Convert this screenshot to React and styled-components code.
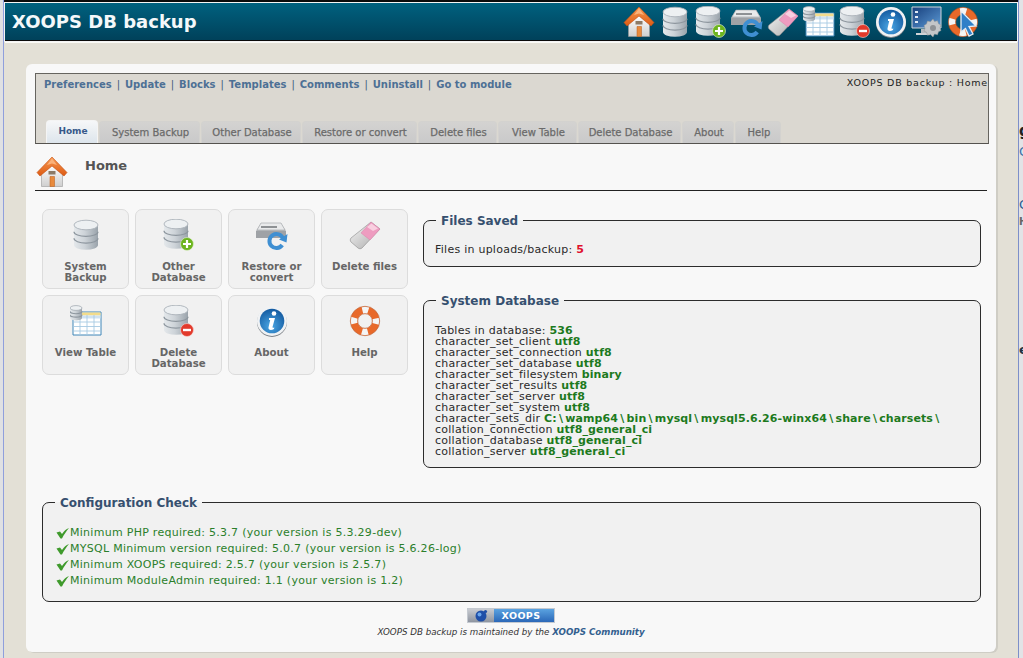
import React from 'react';
import styled, { createGlobalStyle } from 'styled-components';

const GlobalStyle = createGlobalStyle`
  html, body {
    margin: 0;
    padding: 0;
    height: 100%;
    overflow: hidden;
    background: #e3e0d6;
  }
  body {
    font-family: "DejaVu Sans", Verdana, sans-serif;
    font-size: 11px;
    color: #222;
  }
`;

const Screen = styled.div`
  display: flex;
  width: 1023px;
  height: 658px;
  overflow: hidden;
`;

const LeftEdge = styled.div`
  flex: 0 0 4px;
  background: #dfe0e3;
  border-right: 1px solid #8f9fdc;
  box-sizing: border-box;
`;

const RightEdge = styled.div`
  flex: 0 0 5px;
  box-sizing: border-box;
  border-left: 1px solid #7d8fc9;
  background: #e2e3e6;
  display: flex;
  flex-direction: column;
  overflow: hidden;
`;

const Fragment = styled.span`
  display: block;
  margin-top: ${p => p.$top}px;
  font-size: ${p => p.$size || 13}px;
  line-height: 14px;
  font-weight: ${p => (p.$bold ? 700 : 400)};
  color: ${p => p.$color || '#333'};
  white-space: nowrap;
`;

const Page = styled.div`
  flex: 1;
  min-width: 0;
  display: flex;
  flex-direction: column;
  background: #e3e0d6;
`;

const TopBar = styled.header`
  height: 42px;
  box-sizing: border-box;
  border-top: 2px solid #0b0b0b;
  background: #f4f4f4;
  padding-top: 1px;
  display: flex;
  flex-direction: column;
  flex-shrink: 0;
`;

const TopBarInner = styled.div`
  height: 37px;
  margin-left: 1px;
  margin-right: 1px;
  padding: 0 38px 0 7px;
  display: flex;
  align-items: center;
  justify-content: space-between;
  background: linear-gradient(#00617f, #00415a);
  border-bottom: 1px solid #0a0a0a;
`;

const Title = styled.h1`
  margin: 0;
  font-size: 18px;
  line-height: 24px;
  font-weight: 700;
  color: #f4f8fa;
`;

const IconBar = styled.nav`
  display: flex;
  gap: 4px;
  align-items: center;
`;

const TopLine = styled.div`
  height: 1px;
  margin: 0 1px;
  background: #fbfbf6;
  flex-shrink: 0;
`;

const Outer = styled.main`
  flex: 1;
  min-height: 0;
  padding: 21px 22px 6px 22px;
  display: flex;
  flex-direction: column;
`;

const Card = styled.section`
  flex: 1;
  box-sizing: border-box;
  padding: 9px 7px 0 9px;
  background: #f8f8f8;
  border-radius: 6px;
  box-shadow: 2px 1px 0 #cfcdc5;
`;

const AdminNav = styled.div`
  height: 71px;
  box-sizing: border-box;
  border: 1px solid #66645f;
  border-bottom-color: #55534f;
  background: #dbd8d1;
  display: flex;
  flex-direction: column;
`;

const AdminTop = styled.div`
  display: flex;
  justify-content: space-between;
  padding: 4px 0 0 8px;
`;

const AdminLinks = styled.div`
  font-size: 10px;
  line-height: 14px;
  color: #3c5a7c;
`;

const AdminLink = styled.a`
  font-weight: 700;
  color: #4d7095;
`;

const Sep = styled.span`
  margin: 0 1.8px;
`;

const Crumb = styled.div`
  margin-top: -1px;
  font-size: 9.5px;
  line-height: 12px;
  color: #222;
  letter-spacing: 0.78px;
`;

const Tabs = styled.ul`
  list-style: none;
  display: flex;
  gap: 1px;
  margin: auto 0 0 10px;
  padding: 0;
`;

const Tab = styled.li`
  box-sizing: border-box;
  width: ${p => p.$width}px;
  height: ${p => (p.$active ? 23 : 22)}px;
  padding-left: 2px;
  border: 1px solid ${p => (p.$active ? '#f4f4f4' : '#d3d2cf')};
  border-bottom: 0;
  border-radius: 4px 4px 0 0;
  background: ${p => (p.$active
    ? 'linear-gradient(#f6f7f8, #dde5ec)'
    : 'linear-gradient(#d4d3d1, #c9c9ca)')};
  color: ${p => (p.$active ? '#37598a' : '#6a6a6a')};
  font-size: ${p => (p.$active ? 9 : 10)}px;
  font-weight: ${p => (p.$active ? 700 : 400)};
  -webkit-text-stroke: ${p => (p.$active ? 0 : 0.25)}px;
  line-height: 21px;
  text-align: center;
  white-space: nowrap;
  align-self: flex-end;
`;

const PageHead = styled.div`
  display: flex;
  height: 47px;
  box-sizing: border-box;
  margin-right: 2px;
  border-bottom: 1px solid #222;
  padding-top: 12px;
`;

const HeadIcon = styled.div`
  width: 49px;
  flex-shrink: 0;
  margin-left: 1px;
`;

const HeadText = styled.h2`
  margin: 2px 0 0 0;
  font-size: 13px;
  line-height: 16px;
  font-weight: 700;
  color: #555;
`;

const Columns = styled.div`
  display: flex;
  gap: 15px;
  margin: 18px 8px 0 7px;
`;

const ButtonGrid = styled.div`
  display: grid;
  grid-template-columns: repeat(4, 87px);
  grid-auto-rows: 80px;
  gap: 6px;
  align-content: start;
  flex-shrink: 0;
`;

const IconButton = styled.a`
  box-sizing: border-box;
  display: flex;
  flex-direction: column;
  align-items: center;
  padding-top: 9px;
  background: #f1f1f1;
  border: 1px solid #dcdcdc;
  border-radius: 7px;
  color: #666;
  font-size: 10.2px;
  font-weight: 700;
  line-height: 11px;
  text-align: center;
`;

const ButtonLabel = styled.span`
  margin-top: 10px;
  display: block;
`;

const Side = styled.div`
  flex: 1;
  min-width: 0;
  display: flex;
  flex-direction: column;
  gap: 25px;
  padding-top: 3px;
`;

const Box = styled.fieldset`
  margin: 0;
  min-width: 0;
  padding: ${p => p.$pad || '15px 11px 11px'};
  background: #f1f1f1;
  border: 1px solid #2c2c2c;
  border-radius: 7px;
`;

const BoxTitle = styled.legend`
  margin-left: 1px;
  padding: 2px 5px 0;
  font-size: 12px;
  line-height: 15px;
  font-weight: 700;
  color: #36506f;
`;

const Line = styled.div`
  font-size: 11px;
  line-height: 11px;
  letter-spacing: 0.25px;
  color: #2a2a2a;
  white-space: nowrap;
`;

const Value = styled.span`
  font-weight: 700;
  letter-spacing: 0.1px;
  color: ${p => p.$color || '#1d7a1d'};
`;

const Slash = styled.span`
  margin: 0 2.2px;
`;

const ConfigBox = styled.div`
  margin: 26px 8px 0 7px;
`;

const CheckRow = styled.div`
  display: flex;
  align-items: center;
  height: 16px;
  margin-left: 2px;
  color: #2b7f2b;
  font-size: 11px;
  letter-spacing: 0.28px;
  white-space: nowrap;
`;

const CheckIcon = styled.svg`
  width: 13px;
  height: 13px;
  margin-right: 1px;
  flex-shrink: 0;
`;

const Footer = styled.footer`
  display: flex;
  flex-direction: column;
  align-items: center;
  margin-top: 6px;
  margin-right: 2px;
`;

const Badge = styled.div`
  width: 88px;
  height: 15px;
  display: flex;
  border: 1px solid #c4c9d0;
  box-sizing: border-box;
`;

const BadgeLogo = styled.div`
  flex: 0 0 26px;
  background: linear-gradient(#c9ccd2, #8f95a0);
  display: flex;
  align-items: center;
  justify-content: center;
`;

const BadgeName = styled.div`
  flex: 1;
  background: linear-gradient(#5aa2e0, #2b68b8);
  color: #fff;
  font-size: 9.5px;
  font-weight: 700;
  line-height: 13px;
  letter-spacing: 0.4px;
  padding-right: 6px;
  text-align: center;
`;

const Caption = styled.p`
  margin: 3px 0 0;
  font-size: 8.7px;
  line-height: 12px;
  font-style: italic;
  color: #333;
`;

const CaptionLink = styled.a`
  font-weight: 700;
  color: #33608f;
`;

const Defs = styled.svg`
  display: block;
  width: 0;
  height: 0;
`;

const IconSvg = styled.svg`
  display: block;
  flex-shrink: 0;
  width: ${p => p.$size || 32}px;
  height: ${p => p.$size || 32}px;
`;

const SharedDefs = () => (
  <Defs aria-hidden="true">
    <defs>
      <linearGradient id="dbBody" x1="0" x2="1" y1="0" y2="0">
        <stop offset="0" stopColor="#e4e8eb" />
        <stop offset="0.45" stopColor="#cdd3d8" />
        <stop offset="1" stopColor="#9aa3ab" />
      </linearGradient>
      <linearGradient id="roof" x1="0" x2="0" y1="0" y2="1">
        <stop offset="0" stopColor="#f79a54" />
        <stop offset="1" stopColor="#dd5a12" />
      </linearGradient>
      <linearGradient id="wall" x1="0" x2="0" y1="0" y2="1">
        <stop offset="0" stopColor="#fff" />
        <stop offset="1" stopColor="#cfcfcf" />
      </linearGradient>
      <linearGradient id="eraser" x1="0" x2="1" y1="0" y2="1">
        <stop offset="0" stopColor="#f7f7f7" />
        <stop offset="1" stopColor="#a9a9a9" />
      </linearGradient>
      <radialGradient id="infoBlue" cx="0.45" cy="0.7" r="0.8">
        <stop offset="0" stopColor="#4aa6e4" />
        <stop offset="1" stopColor="#0b4f96" />
      </radialGradient>
      <linearGradient id="screenBlue" x1="0" x2="1" y1="0" y2="1">
        <stop offset="0" stopColor="#173f7c" />
        <stop offset="1" stopColor="#5d9bd6" />
      </linearGradient>
    </defs>
  </Defs>
);

const Cylinder = ({ x = 5, w = 22, top = 7, h = 21 }) => {
  const rx = w / 2;
  const ry = w * 0.2;
  const cx = x + rx;
  const step = h / 3;
  const arc = y => `M${x} ${y}a${rx} ${ry} 0 0 0 ${w} 0`;
  return (
    <g>
      <path d={`M${x} ${top}v${h}a${rx} ${ry} 0 0 0 ${w} 0v-${h}z`} fill="url(#dbBody)" />
      <path d={arc(top + step)} fill="none" stroke="#8d969e" strokeWidth="1.2" />
      <path d={arc(top + step * 2)} fill="none" stroke="#8d969e" strokeWidth="1.2" />
      <ellipse cx={cx} cy={top} rx={rx} ry={ry} fill="#edf0f2" stroke="#a3abb2" strokeWidth="0.8" />
    </g>
  );
};

const HomeIcon = ({ size }) => (
  <IconSvg $size={size} viewBox="0 0 32 32">
    <path d="M16 9 26.500 17.500V30.500H5.500V17.500z" fill="url(#wall)" stroke="#9a9a9a" strokeWidth="0.6" />
    <path d="M16 1 31 16.500 28 20 16 10 4 20 1 16.500z" fill="url(#roof)" stroke="#c44f10" strokeWidth="0.6" />
    <path d="M16 2.500 21 9 16 7.500 11 9z" fill="#fbb27a" />
    <path d="M12.500 15h7v3.500h-7z" fill="#8c7a66" />
    <path d="M14 20.500h4.500v10H14z" fill="#e88a3c" stroke="#b65a18" strokeWidth="0.5" />
  </IconSvg>
);

const DbIcon = ({ size }) => (
  <IconSvg $size={size} viewBox="0 0 32 32">
    <Cylinder x={4} w={24} top={6} h={20} />
  </IconSvg>
);

const DbAddIcon = ({ size }) => (
  <IconSvg $size={size} viewBox="0 0 32 32">
    <Cylinder x={1} w={24} top={5} h={20} />
    <circle cx="24" cy="25" r="6.5" fill="#6cb41e" stroke="#e8f4d8" strokeWidth="0.6" />
    <path d="M24 21v8M20 25h8" stroke="#fff" strokeWidth="2.2" />
  </IconSvg>
);

const DbDelIcon = ({ size }) => (
  <IconSvg $size={size} viewBox="0 0 32 32">
    <Cylinder x={1} w={24} top={5} h={20} />
    <circle cx="24" cy="25" r="6.5" fill="#e23a2c" stroke="#f8dcd8" strokeWidth="0.6" />
    <path d="M20 25h8" stroke="#fff" strokeWidth="2.4" />
  </IconSvg>
);

const RestoreIcon = ({ size }) => (
  <IconSvg $size={size} viewBox="0 0 32 32">
    <path d="M5 4h20l5 8v7H0v-7z" fill="#b9bcbf" />
    <path d="M5 4h20l4 7H1z" fill="#e9eaeb" stroke="#a0a3a6" strokeWidth="0.6" />
    <path d="M5 7h16v2H5z" fill="#8e9194" />
    <path d="M0 12h30v7H0z" fill="#9fa2a6" />
    <path d="M27 19.500a7 7 0 1 0-.8 6.500" fill="none" stroke="#3f8fd2" strokeWidth="4" />
    <path d="M31.500 15 30.500 23.500 23 20.500z" fill="#3f8fd2" />
  </IconSvg>
);

const EraserIcon = ({ size }) => (
  <IconSvg $size={size} viewBox="0 0 32 32">
    <path d="M22 3 31 10 13 29c-1 1-3 1-4 0l-7-6c-1-1-1-3 0-4z" fill="url(#eraser)" stroke="#8a8a8a" strokeWidth="0.6" />
    <path d="M22 3 31 10 21 21 12 14z" fill="#ee9cc0" stroke="#d97aa4" strokeWidth="0.4" />
    <path d="M22.500 4.500 29 9.500 24 12 18 8z" fill="#f9cfe0" />
  </IconSvg>
);

const TableIcon = ({ size }) => (
  <IconSvg $size={size} viewBox="0 0 32 32">
    <path d="M3 7h28v23H3z" fill="#fff" stroke="#3f86b8" strokeWidth="1" />
    <path d="M3.500 7.500h27v3h-27z" fill="#f3dc8c" />
    <path d="M3.500 10.500h27v3h-27z" fill="#cfe2f2" />
    <path d="M3.500 17h27M3.500 21.500h27M3.500 26h27M10 10v20M17 10v20M24 10v20" stroke="#a7c9e2" strokeWidth="0.9" fill="none" />
    <Cylinder x={0} w={12} top={3} h={10} />
  </IconSvg>
);

const InfoIcon = ({ size }) => (
  <IconSvg $size={size} viewBox="0 0 32 32">
    <circle cx="16" cy="17" r="15" fill="#7d8288" />
    <circle cx="16" cy="16" r="15" fill="#f0f2f4" />
    <circle cx="16" cy="16" r="12.300" fill="url(#infoBlue)" />
    <circle cx="18" cy="8.500" r="2.300" fill="#fff" />
    <path d="M13 13h6l-2.500 9c-.2 1 .6 1 1.800.4l-.3 1.600c-2.500 1.400-6 1.300-5.500-1.500l1.700-7.500H13z" fill="#fff" />
  </IconSvg>
);

const SettingsIcon = ({ size }) => (
  <IconSvg $size={size} viewBox="0 0 32 32">
    <path d="M1 1h29v21H1z" fill="url(#screenBlue)" stroke="#d2d6da" strokeWidth="1" />
    <path d="M4 5h3v2H4zM4 10h3v2H4zM4 15h3v2H4z" fill="#dfe9f4" />
    <path d="M10 23h6v4h-6z" fill="#b8bcc0" />
    <path d="M5 27h14v2H5z" fill="#d0d3d6" />
    <path d="M22 13l1.500 2.500 3-.8 1 3 2.500 1.300-1 2.800 1 2.700-2.500 1.300-1 3-3-.8L22 31l-2.500-2.500-3 .8-1-3-2.500-1.300 1-2.700-1-2.800L15.500 18l1-3 3 .8z" fill="#c4c6c8" stroke="#8f9295" strokeWidth="0.5" />
    <circle cx="22" cy="22" r="3" fill="#8f9295" />
  </IconSvg>
);

const Buoy = () => (
  <g>
    <circle cx="16" cy="16" r="11" fill="none" stroke="#e8692a" strokeWidth="7" />
    <circle cx="16" cy="16" r="11" fill="none" stroke="#f5f5f5" strokeWidth="7" strokeDasharray="6 11.280" strokeDashoffset="3" />
    <circle cx="16" cy="16" r="14.700" fill="none" stroke="#b94c18" strokeWidth="0.6" />
    <circle cx="16" cy="16" r="7.300" fill="none" stroke="#b94c18" strokeWidth="0.6" />
  </g>
);

const HelpIcon = ({ size }) => (
  <IconSvg $size={size} viewBox="0 0 32 32">
    <Buoy />
  </IconSvg>
);

const GuideIcon = ({ size }) => (
  <IconSvg $size={size} viewBox="0 0 32 32">
    <Buoy />
    <path d="M14 5 29 20 22 20.500 26 28 22 30 18.500 22.500 14 26z" fill="#2f7fc8" stroke="#e8eef4" strokeWidth="1.300" />
  </IconSvg>
);

const GlobeIcon = () => (
  <svg width="16" height="13" viewBox="0 0 16 13">
    <circle cx="8" cy="7" r="5.500" fill="#1f4fa8" />
    <circle cx="6.500" cy="5.500" r="2" fill="#6aa6ec" />
    <circle cx="12.500" cy="2.500" r="1.600" fill="#1f4fa8" />
  </svg>
);

const headerIcons = [HomeIcon, DbIcon, DbAddIcon, RestoreIcon, EraserIcon, TableIcon, DbDelIcon, InfoIcon, SettingsIcon, GuideIcon];

const adminLinks = ['Preferences', 'Update', 'Blocks', 'Templates', 'Comments', 'Uninstall', 'Go to module'];

const tabs = [
  { label: 'Home', width: 52, active: true },
  { label: 'System Backup', width: 101 },
  { label: 'Other Database', width: 100 },
  { label: 'Restore or convert', width: 115 },
  { label: 'Delete files', width: 79 },
  { label: 'View Table', width: 79 },
  { label: 'Delete Database', width: 103 },
  { label: 'About', width: 52 },
  { label: 'Help', width: 46 },
];

const buttons = [
  { label: 'System Backup', Icon: DbIcon },
  { label: 'Other Database', Icon: DbAddIcon },
  { label: 'Restore or convert', Icon: RestoreIcon },
  { label: 'Delete files', Icon: EraserIcon },
  { label: 'View Table', Icon: TableIcon },
  { label: 'Delete Database', Icon: DbDelIcon },
  { label: 'About', Icon: InfoIcon },
  { label: 'Help', Icon: HelpIcon },
];

const dbRows = [
  ['Tables in database:', '536'],
  ['character_set_client', 'utf8'],
  ['character_set_connection', 'utf8'],
  ['character_set_database', 'utf8'],
  ['character_set_filesystem', 'binary'],
  ['character_set_results', 'utf8'],
  ['character_set_server', 'utf8'],
  ['character_set_system', 'utf8'],
  ['character_sets_dir', 'C:\\wamp64\\bin\\mysql\\mysql5.6.26-winx64\\share\\charsets\\'],
  ['collation_connection', 'utf8_general_ci'],
  ['collation_database', 'utf8_general_ci'],
  ['collation_server', 'utf8_general_ci'],
];

const checks = [
  'Minimum PHP required: 5.3.7 (your version is 5.3.29-dev)',
  'MYSQL Minimum version required: 5.0.7 (your version is 5.6.26-log)',
  'Minimum XOOPS required: 2.5.7 (your version is 2.5.7)',
  'Minimum ModuleAdmin required: 1.1 (your version is 1.2)',
];

// backslashes are much wider in the original font
const spacedPath = value => value.split(/(\\)/).map((part, i) => (
  part === '\\' ? <Slash key={i}>\</Slash> : part
));

export default function App() {
  return (
    <Screen>
      <GlobalStyle />
      <LeftEdge />
      <Page>
        <SharedDefs />
        <TopBar>
          <TopBarInner>
            <Title>XOOPS DB backup</Title>
            <IconBar>
              {headerIcons.map((Icon, i) => <Icon key={i} />)}
            </IconBar>
          </TopBarInner>
        </TopBar>
        <TopLine />
        <Outer>
          <Card>
            <AdminNav>
              <AdminTop>
                <AdminLinks>
                  {adminLinks.map((link, i) => (
                    <React.Fragment key={link}>
                      {i > 0 && <Sep> | </Sep>}
                      <AdminLink>{link}</AdminLink>
                    </React.Fragment>
                  ))}
                </AdminLinks>
                <Crumb>XOOPS DB backup : Home</Crumb>
              </AdminTop>
              <Tabs>
                {tabs.map(tab => (
                  <Tab key={tab.label} $width={tab.width} $active={tab.active}>{tab.label}</Tab>
                ))}
              </Tabs>
            </AdminNav>
            <PageHead>
              <HeadIcon><HomeIcon /></HeadIcon>
              <HeadText>Home</HeadText>
            </PageHead>
            <Columns>
              <ButtonGrid>
                {buttons.map(({ label, Icon }) => (
                  <IconButton key={label}>
                    <Icon />
                    <ButtonLabel>{label}</ButtonLabel>
                  </IconButton>
                ))}
              </ButtonGrid>
              <Side>
                <Box>
                  <BoxTitle>Files Saved</BoxTitle>
                  <Line>Files in uploads/backup: <Value $color="#e0102c">5</Value></Line>
                </Box>
                <Box $pad="16px 11px 10px">
                  <BoxTitle>System Database</BoxTitle>
                  {dbRows.map(([name, value]) => (
                    <Line key={name}>{name} <Value>{spacedPath(value)}</Value></Line>
                  ))}
                </Box>
              </Side>
            </Columns>
            <ConfigBox>
              <Box $pad="13px 11px 13px">
                <BoxTitle>Configuration Check</BoxTitle>
                {checks.map(text => (
                  <CheckRow key={text}>
                    <CheckIcon viewBox="0 0 13 13">
                      <path d="M0.500 6.500 4 5.500 6 8C8 5 10 3 13 2 10.500 5 8 8.500 6 12.500L4.500 12.500z" fill="#3f9a2c" />
                    </CheckIcon>
                    {text}
                  </CheckRow>
                ))}
              </Box>
            </ConfigBox>
            <Footer>
              <Badge>
                <BadgeLogo><GlobeIcon /></BadgeLogo>
                <BadgeName>XOOPS</BadgeName>
              </Badge>
              <Caption>XOOPS DB backup is maintained by the <CaptionLink>XOOPS Community</CaptionLink></Caption>
            </Footer>
          </Card>
        </Outer>
      </Page>
      <RightEdge>
        <Fragment $top={124} $size={15} $bold $color="#222">g</Fragment>
        <Fragment $top={7} $color="#3c6fa8">C</Fragment>
        <Fragment $top={39} $color="#2c5a90">C</Fragment>
        <Fragment $top={3} $size={10} $bold $color="#666">H</Fragment>
        <Fragment $top={114} $bold $color="#234">e</Fragment>
      </RightEdge>
    </Screen>
  );
}
